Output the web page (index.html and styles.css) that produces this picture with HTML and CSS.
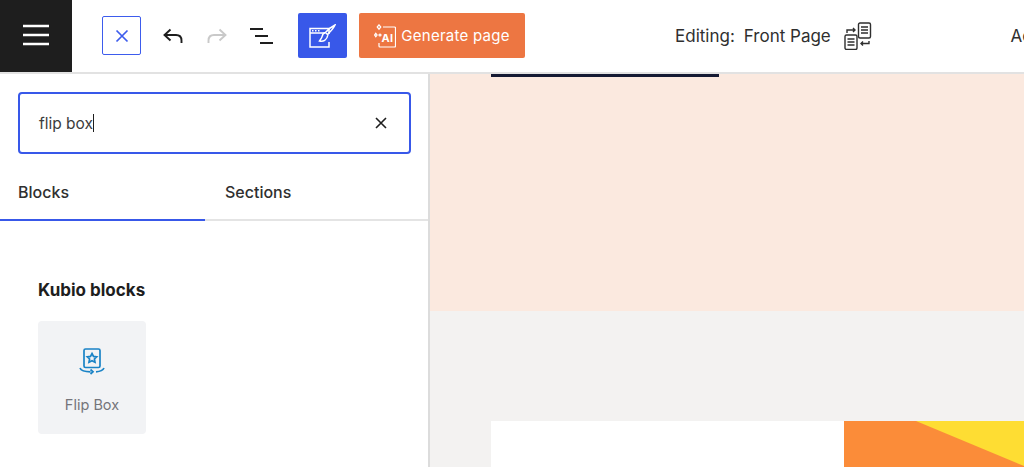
FILE: index.html
```html
<!DOCTYPE html>
<html lang="en">
<head>
    <meta charset="UTF-8">
    <meta name="viewport" content="width=device-width, initial-scale=1.0">
    <title>Kubio editor</title>
    <link rel="stylesheet" href="styles.css">
</head>
<body>
    <header class="topbar">
        <button class="menu-btn" aria-label="Menu">
            <svg width="28" height="22" viewBox="0 0 28 22"><path d="M1 2h26M1 11h26M1 20h26" stroke="#fff" stroke-width="2.6" fill="none"/></svg>
        </button>
        <button class="close-btn" aria-label="Close">
            <svg width="14" height="14" viewBox="0 0 14 14"><path d="M1.500 1.500l11 11M12.500 1.500l-11 11" stroke="#3d5ced" stroke-width="1.700" fill="none"/></svg>
        </button>
        <button class="icon-btn undo" aria-label="Undo">
            <svg width="20" height="16" viewBox="0 0 20 16"><path d="M7.500 1.500L1.500 7l6 5.500M1.500 7H13c3.500 0 5.500 2.200 5.500 5.500V15" stroke="#1e1e1e" stroke-width="1.900" fill="none"/></svg>
        </button>
        <button class="icon-btn redo" aria-label="Redo">
            <svg width="20" height="16" viewBox="0 0 20 16"><path d="M12.500 1.500l6 5.500-6 5.500M18.500 7H7C3.500 7 1.500 9.200 1.500 12.500V15" stroke="#c9c9c9" stroke-width="1.900" fill="none"/></svg>
        </button>
        <button class="icon-btn list" aria-label="List view">
            <svg width="23" height="16" viewBox="0 0 23 16"><path d="M0 1h13M5 8h13M10 15h13" stroke="#1e1e1e" stroke-width="1.900" fill="none"/></svg>
        </button>
        <button class="style-btn" aria-label="Style">
            <svg width="27" height="24" viewBox="0 0 27 24" fill="none" stroke="#fff" stroke-width="1.500"><path d="M20 10V4.500H1V23h19v-5M1 9h15"/><path d="M3 6.800h1.500M6 6.800h1.500M9 6.800h1.500"/><path d="M26 1c-3 1.500-7 4.500-9.500 7.500l2 2C21 8 24.500 4.500 26 1zM16.500 8.500c-2 .5-3 2-3.200 3.500-.2 1.500-1.300 3-2.800 5 3.500 1 7.500-.5 8.500-6.500"/></svg>
        </button>
        <button class="generate-btn">
            <svg width="22" height="24" viewBox="0 0 22 24" fill="none" stroke="#fff" stroke-width="1.200"><path d="M9 3h11.500a1 1 0 011 1v18a1 1 0 01-1 1H6a1 1 0 01-1-1v-3"/><path d="M5 .8l1.800 2.200L5 5.200 3.200 3z"/><path d="M1.800 9.300l1.300 1.700-1.300 1.700L.6 11z"/><circle cx="6" cy="11" r="1"/><text class="ai-mark" x="7.500" y="18">AI</text></svg>
            <span>Generate page</span>
        </button>
        <div class="editing">
            <span class="editing-label">Editing:</span>
            <span>Front Page</span>
            <svg width="28" height="28" viewBox="0 0 28 28" fill="none" stroke="#2f2f2f" stroke-width="1.400"><rect x="14.500" y="1" width="12" height="15" rx="1.500"/><rect x="1" y="13" width="12" height="14.500" rx="1.500"/><path d="M17 5h7M17 8h7M17 11h7M3.500 17h7M3.500 20h7M3.500 23h7"/><path d="M3 11V8h8M9 6l2 2-2 2M25 19v2.500h-8M19 19.500l-2 2 2 2"/></svg>
        </div>
        <span class="cut-off">Ac</span>
    </header>

    <div class="workspace">
        <aside class="sidebar">
            <div class="search">
                <span class="search-text">flip box</span>
                <span class="caret"></span>
                <svg class="search-clear" width="12" height="12" viewBox="0 0 12 12"><path d="M1 1l10 10M11 1L1 11" stroke="#1e1e1e" stroke-width="1.600" fill="none"/></svg>
            </div>
            <nav class="tabs">
                <div class="tab tab-active">Blocks</div>
                <div class="tab">Sections</div>
            </nav>
            <div class="results">
                <h2>Kubio blocks</h2>
                <div class="block-card">
                    <svg width="26" height="27" viewBox="0 0 26 27" fill="none" stroke="#1a83c6" stroke-width="1.700"><rect x="5" y="1" width="16" height="18.500" rx="1.500"/><path d="M13 5.500l1.500 2.900 3.200.4-2.300 2.200.6 3.200-3-1.500-3 1.500.6-3.200-2.300-2.200 3.200-.4z"/><path d="M1 20c1 2.500 5 3.800 10.500 3.800M25 20c-1 2.200-4 3.500-8 3.800M11.500 21.500l2.500 2.300-2.500 2.200"/></svg>
                    <span>Flip Box</span>
                </div>
            </div>
        </aside>

        <main class="canvas">
            <section class="hero">
                <div class="hero-bar"></div>
            </section>
            <section class="page-row">
                <div class="page-white"></div>
                <svg class="page-image" viewBox="0 0 180 46" preserveAspectRatio="none"><rect width="180" height="46" fill="#fb8c39"/><polygon points="72,0 180,0 180,45" fill="#fedd33"/></svg>
            </section>
        </main>
    </div>
</body>
</html>
```

FILE: styles.css
```css
* {
    box-sizing: border-box;
}
html, body {
    height: 100%;
}
body {
    margin: 0;
    display: flex;
    flex-direction: column;
    overflow: hidden;
    background: #fff;
    color: #1e1e1e;
    font-family: Inter, "Liberation Sans", sans-serif;
}
button {
    padding: 0;
    border: none;
    background: none;
    font-family: inherit;
    display: flex;
    align-items: center;
    justify-content: center;
}

/* top bar */
.topbar {
    height: 74px;
    flex: none;
    display: flex;
    align-items: center;
    padding-bottom: 1px;
    border-bottom: 2px solid #e2e2e2;
    overflow: hidden;
}
.menu-btn {
    width: 72px;
    height: 73px;
    padding-bottom: 4px;
    align-self: flex-start;
    background: #1e1e1e;
}
.close-btn {
    width: 39px;
    height: 39px;
    margin-left: 30px;
    border: 1.500px solid #3d5ced;
    border-radius: 2px;
}
.icon-btn {
    width: 23px;
    height: 24px;
}
.undo {
    margin-left: 20px;
}
.redo {
    margin-left: 21px;
}
.list {
    margin-left: 22px;
}
.style-btn {
    width: 49px;
    height: 45px;
    margin-left: 25px;
    background: #3858e9;
    border-radius: 2px;
}
.generate-btn {
    width: 166px;
    height: 45px;
    margin-left: 12px;
    gap: 5px;
    background: #ed7642;
    border-radius: 2px;
    color: #fff;
    font-size: 15px;
    letter-spacing: 0.25px;
}
.ai-mark {
    font-size: 11px;
    font-weight: 700;
    fill: #fff;
    stroke: none;
}
.editing {
    margin-left: 150px;
    display: flex;
    align-items: center;
    font-size: 17px;
    color: #2f2f2f;
}
.editing-label {
    margin-right: 9px;
}
.editing svg {
    margin-left: 13px;
}
.cut-off {
    margin-left: auto;
    margin-right: -8px;
    font-size: 17px;
    color: #2f2f2f;
}

/* main area */
.workspace {
    flex: 1;
    display: flex;
    min-height: 0;
}
.sidebar {
    width: 430px;
    flex: none;
    padding-top: 18px;
    border-right: 2px solid #dcdcdc;
}
.search {
    height: 62px;
    margin: 0 17px 0 18px;
    padding: 0 22px 0 19px;
    display: flex;
    align-items: center;
    border: 2px solid #3858e9;
    border-radius: 4px;
    font-size: 15.5px;
    color: #3c3c3c;
}
.caret {
    width: 1px;
    height: 18px;
    background: #1e1e1e;
}
.search-clear {
    margin-left: auto;
}
.tabs {
    height: 67px;
    display: flex;
    border-bottom: 2px solid #e4e4e4;
}
.tab {
    width: 205px;
    margin-bottom: -2px;
    padding: 28px 0 0 18px;
    font-size: 16px;
    font-weight: 500;
    color: #2f2f2f;
}
.tab + .tab {
    padding-left: 20px;
}
.tab-active {
    border-bottom: 2px solid #3858e9;
}
.results {
    padding: 59px 0 0 38px;
}
.results h2 {
    margin: 0 0 21px;
    font-size: 17px;
    line-height: 20px;
    font-weight: 700;
    color: #1e1e1e;
}
.block-card {
    width: 108px;
    height: 113px;
    padding-top: 27px;
    display: flex;
    flex-direction: column;
    align-items: center;
    gap: 21px;
    background: #f2f3f5;
    border-radius: 4px;
    font-size: 14.500px;
    color: #75757a;
}

/* page preview */
.canvas {
    flex: 1;
    min-width: 0;
    display: flex;
    flex-direction: column;
    background: #f3f2f1;
}
.hero {
    height: 237px;
    flex: none;
    padding-left: 61px;
    background: #fbe9df;
}
.hero-bar {
    width: 228px;
    height: 3px;
    background: #151a33;
}
.page-row {
    height: 46px;
    margin-top: 110px;
    padding-left: 61px;
    display: flex;
}
.page-white {
    width: 353px;
    background: #fff;
}
.page-image {
    flex: 1;
    min-width: 0;
    height: 46px;
}
```
